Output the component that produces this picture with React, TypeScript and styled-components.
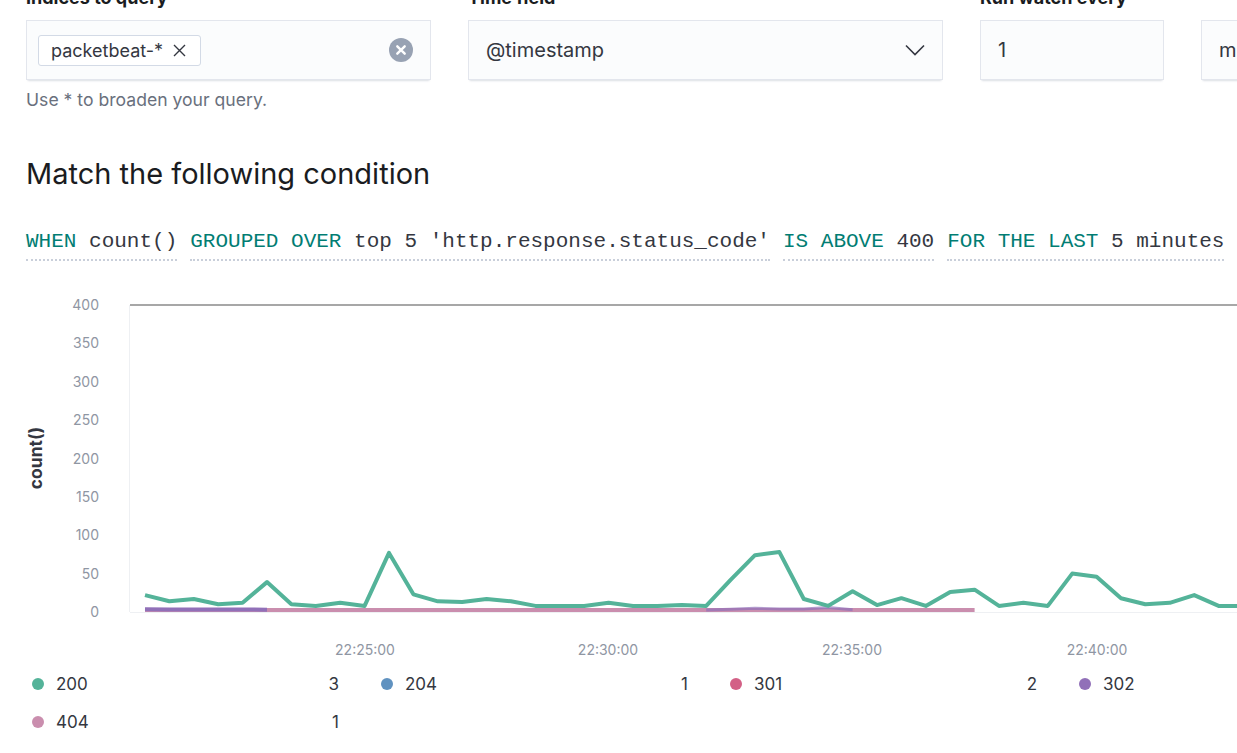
import React from "react";
import styled, { createGlobalStyle } from "styled-components";

const Global = createGlobalStyle`
  html, body { margin: 0; padding: 0; background: #ffffff; overflow: hidden; }
  body { font-family: Inter, "Noto Sans", sans-serif; color: #343741; }
`;

const Page = styled.div`
  margin-top: -14px;
  width: 1600px;
`;

const Content = styled.div`
  padding-left: 26px;
`;

const FieldRow = styled.div`
  display: flex;
  gap: 37px;
`;

const Field = styled.div<{ $w: number }>`
  display: flex;
  flex-direction: column;
  flex: none;
  width: ${(p) => p.$w}px;
`;

const Label = styled.label`
  font-size: 18px;
  font-weight: 700;
  line-height: 24px;
  margin-bottom: 10px;
  color: #1a1c21;
`;

const Control = styled.div`
  box-sizing: border-box;
  height: 60px;
  display: flex;
  align-items: center;
  gap: 10px;
  padding: 0 18px 0 12px;
  background: #fbfcfd;
  box-shadow: 0 1px 1px -1px rgba(152, 162, 179, 0.3),
    0 3px 2px -2px rgba(152, 162, 179, 0.3),
    inset 0 0 0 1px rgba(15, 38, 100, 0.1);
  font-size: 20px;
  color: #343741;
`;

const ControlText = styled.span<{ $pad?: number }>`
  flex: 1;
  padding-left: ${(p) => p.$pad ?? 6}px;
  white-space: nowrap;
`;

const Chip = styled.span`
  box-sizing: border-box;
  display: inline-flex;
  align-items: center;
  gap: 10px;
  height: 31px;
  padding: 0 14px 0 12px;
  background: #ffffff;
  border: 1px solid #d3dae6;
  border-radius: 3px;
  font-size: 18px;
  color: #343741;
`;

const Spacer = styled.span`
  flex: 1;
`;

const HelpText = styled.div`
  margin-top: 9px;
  font-size: 17.6px;
  line-height: 22px;
  color: #69707d;
`;

const Heading = styled.h3`
  margin: 45px 0 0;
  font-size: 29px;
  line-height: 36px;
  font-weight: 400;
  color: #1a1c21;
`;

const Expression = styled.div`
  margin-top: 35px;
  display: flex;
  gap: 13px;
  font-family: "Liberation Mono", "DejaVu Sans Mono", monospace;
  font-size: 21px;
`;

const ExprButton = styled.span`
  display: inline-block;
  line-height: 30px;
  padding-bottom: 2px;
  border-bottom: 2px dotted #c9cfda;
  white-space: pre;
  color: #343741;
`;

const Kw = styled.span`
  color: #017d73;
`;

const ChartSvg = styled.svg`
  display: block;
  margin-top: 29px;
`;

const Legend = styled.div`
  display: grid;
  grid-template-columns: repeat(4, 308px);
  column-gap: 41px;
  padding-left: 32px;
`;

const LegendItem = styled.div`
  display: flex;
  align-items: center;
  height: 38px;
  font-size: 17px;
  color: #343741;
`;

const Dot = styled.span<{ $c: string }>`
  width: 12px;
  height: 12px;
  border-radius: 50%;
  background: ${(p) => p.$c};
  margin-right: 12px;
  flex: none;
`;

const LegendLabel = styled.span`
  flex: 1;
`;

const LegendValue = styled.span`
  padding-right: 1px;
`;

const green = [
  22, 14, 17, 10, 12, 39, 10, 8, 12, 8, 77, 23, 14, 13, 17, 14, 8, 8, 8, 12, 8, 8,
  9, 8, 42, 74, 78, 17, 8, 27, 9, 18, 8, 26, 29, 8, 12, 8, 50, 46, 18, 10, 12,
  22, 8, 8,
];

const X0 = 145;
const DX = 24.4;
const Y0 = 322;
const K = 0.7675;

const toPts = (vals: number[], start = 0) =>
  vals.map((v, i) => `${(X0 + (i + start) * DX).toFixed(1)},${(Y0 - v * K).toFixed(1)}`).join(" ");

const pinkVals = Array.from({ length: 35 }, () => 2.5);
const purpleStart = [3.5, 3.3, 3.2, 3.2, 3.2, 3];
const purpleMid = [2.8, 3.5, 5, 4, 4, 6, 3];

const yTicks = [400, 350, 300, 250, 200, 150, 100, 50, 0];
const xTicks = [
  { x: 365, t: "22:25:00" },
  { x: 608, t: "22:30:00" },
  { x: 852, t: "22:35:00" },
  { x: 1097, t: "22:40:00" },
];

const legend = [
  { c: "#54B399", l: "200", v: "3" },
  { c: "#6092C0", l: "204", v: "1" },
  { c: "#D36086", l: "301", v: "2" },
  { c: "#9170B8", l: "302", v: "" },
  { c: "#CA8EAE", l: "404", v: "1" },
];

const ClearIcon = () => (
  <svg width="24" height="24" viewBox="0 0 24 24">
    <circle cx="12" cy="12" r="12" fill="#98A2B3" />
    <path d="M8.3 8.3 L15.7 15.7 M15.7 8.3 L8.3 15.7" stroke="#fff" strokeWidth="2.4" strokeLinecap="round" />
  </svg>
);

const ChipClose = () => (
  <svg width="13" height="13" viewBox="0 0 13 13">
    <path d="M1 1 L12 12 M12 1 L1 12" stroke="#343741" strokeWidth="1.4" />
  </svg>
);

const Chevron = () => (
  <svg width="20" height="12" viewBox="0 0 20 12">
    <path d="M1 1.5 L10 10.5 L19 1.5" fill="none" stroke="#343741" strokeWidth="1.6" />
  </svg>
);

export default function App() {
  return (
    <Page>
      <Global />
      <Content>
        <FieldRow>
          <Field $w={405}>
            <Label>Indices to query</Label>
            <Control>
              <Chip>
                packetbeat-*
                <ChipClose />
              </Chip>
              <Spacer />
              <ClearIcon />
            </Control>
            <HelpText>Use * to broaden your query.</HelpText>
          </Field>
          <Field $w={475}>
            <Label>Time field</Label>
            <Control>
              <ControlText>@timestamp</ControlText>
              <Chevron />
            </Control>
          </Field>
          <Field $w={184}>
            <Label>Run watch every</Label>
            <Control>
              <ControlText>1</ControlText>
            </Control>
          </Field>
          <Field $w={300}>
            <Label>&nbsp;</Label>
            <Control>
              <ControlText>minutes</ControlText>
            </Control>
          </Field>
        </FieldRow>

        <Heading>Match the following condition</Heading>

        <Expression>
          <ExprButton>
            <Kw>WHEN</Kw> count()
          </ExprButton>
          <ExprButton>
            <Kw>GROUPED OVER</Kw> top 5 'http.response.status_code'
          </ExprButton>
          <ExprButton>
            <Kw>IS ABOVE</Kw> 400
          </ExprButton>
          <ExprButton>
            <Kw>FOR THE LAST</Kw> 5 minutes
          </ExprButton>
        </Expression>
      </Content>

      <ChartSvg width="1237" height="375" viewBox="0 0 1237 375">
        <line x1="129.5" y1="15" x2="129.5" y2="322" stroke="#eef0f3" strokeWidth="1" />
        <line x1="130" y1="322.5" x2="1237" y2="322.5" stroke="#eef0f3" strokeWidth="1" />
        <line x1="130" y1="15" x2="1237" y2="15" stroke="#a7a7a7" strokeWidth="2" />
        {yTicks.map((v) => (
          <text
            key={v}
            x="99"
            y={Y0 - v * K + 5}
            textAnchor="end"
            fontSize="14"
            fill="#8f96a3"
            fontFamily="Inter, sans-serif"
          >
            {v}
          </text>
        ))}
        <text
          transform="translate(42 168) rotate(-90)"
          textAnchor="middle"
          fontSize="17.5"
          fontWeight="700"
          fill="#343741"
          fontFamily="Inter, sans-serif"
        >
          count()
        </text>
        {xTicks.map((t) => (
          <text
            key={t.t}
            x={t.x}
            y="365"
            textAnchor="middle"
            fontSize="14"
            fill="#8f96a3"
            fontFamily="Inter, sans-serif"
          >
            {t.t}
          </text>
        ))}
        <polyline points={toPts(pinkVals)} fill="none" stroke="#CA8EAE" strokeWidth="4" strokeLinejoin="round" />
        <polyline points={toPts(purpleStart)} fill="none" stroke="#9170B8" strokeWidth="4" strokeLinejoin="round" />
        <polyline
          points={toPts(purpleMid, 23)}
          fill="none"
          stroke="#9170B8"
          strokeOpacity="0.7"
          strokeWidth="3"
          strokeLinejoin="round"
        />
        <polyline points={toPts(green)} fill="none" stroke="#54B399" strokeWidth="4" strokeLinejoin="round" />
      </ChartSvg>

      <Legend>
        {legend.map((it) => (
          <LegendItem key={it.l}>
            <Dot $c={it.c} />
            <LegendLabel>{it.l}</LegendLabel>
            <LegendValue>{it.v}</LegendValue>
          </LegendItem>
        ))}
      </Legend>
    </Page>
  );
}
